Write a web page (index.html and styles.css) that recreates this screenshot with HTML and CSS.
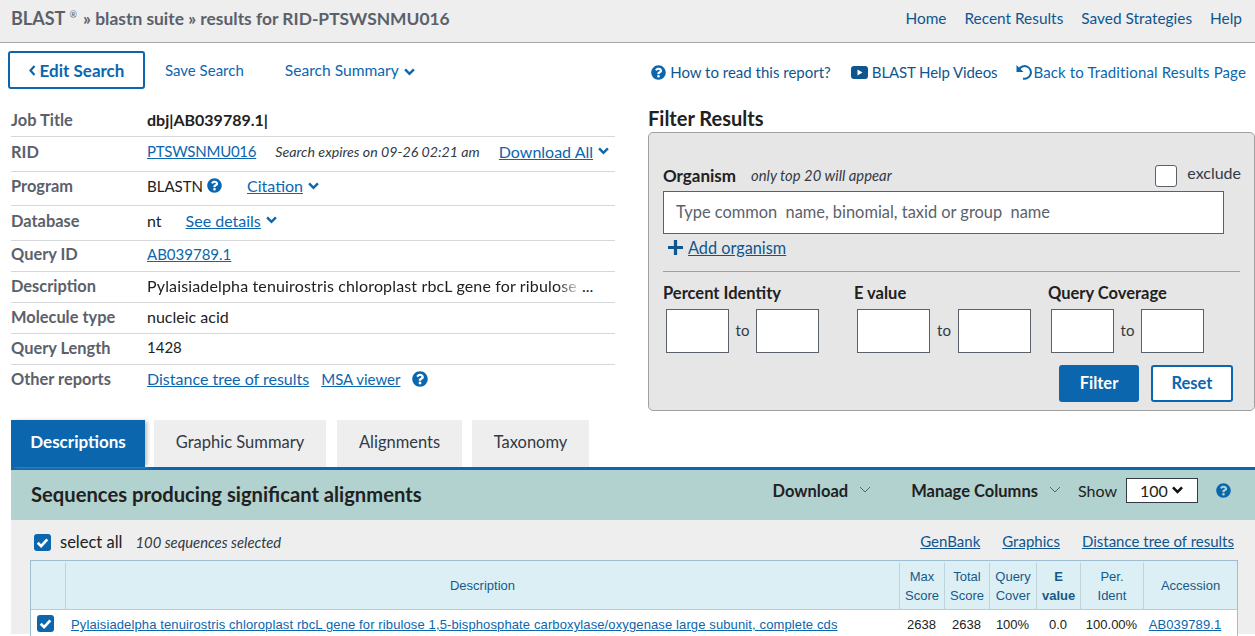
FILE: index.html
```html
<!DOCTYPE html>
<html lang="en">
<head>
    <meta charset="UTF-8">
    <meta name="viewport" content="width=device-width, initial-scale=1.0">
    <title>NCBI Blast: results for RID-PTSWSNMU016</title>
    <link rel="stylesheet" href="styles.css">
</head>
<body>
    <svg class="icon-defs" xmlns="http://www.w3.org/2000/svg">
        <symbol id="i-help" viewBox="0 0 512 512">
            <path fill="currentColor" d="M504 256c0 136.997-111.043 248-248 248S8 392.997 8 256C8 119.083 119.043 8 256 8s248 111.083 248 248zM262.655 90c-54.497 0-89.255 22.957-116.549 63.758-3.536 5.286-2.353 12.415 2.715 16.258l34.699 26.31c5.205 3.947 12.621 3.008 16.665-2.122 17.864-22.658 30.113-35.797 57.303-35.797 20.429 0 45.698 13.148 45.698 32.958 0 14.976-12.363 22.667-32.534 33.976C247.128 238.528 216 254.941 216 296v4c0 6.627 5.373 12 12 12h56c6.627 0 12-5.373 12-12v-1.333c0-28.462 83.186-29.647 83.186-106.667 0-58.002-60.165-102-116.531-102zM256 338c-25.365 0-46 20.635-46 46 0 25.364 20.635 46 46 46s46-20.636 46-46c0-25.365-20.635-46-46-46z"/>
        </symbol>
        <symbol id="i-down" viewBox="0 0 10 7">
            <path fill="none" stroke="currentColor" stroke-width="2.2" d="M1 1.200l4 4 4-4"/>
        </symbol>
        <symbol id="i-down-thin" viewBox="0 0 12 7">
            <path fill="none" stroke="currentColor" stroke-width="1" d="M1 1l5 5 5-5"/>
        </symbol>
        <symbol id="i-check" viewBox="0 0 16 16">
            <path fill="none" stroke="#fff" stroke-width="2.6" d="M3.500 8.200l3.200 3.200 5.800-6.400"/>
        </symbol>
    </svg>

    <header class="topbar">
        <div class="crumbs"><span class="crumb-blast">BLAST</span><sup>®</sup> » blastn suite » results for RID-PTSWSNMU016</div>
        <nav class="topnav">
            <a href="#">Home</a>
            <a href="#">Recent Results</a>
            <a href="#">Saved Strategies</a>
            <a href="#">Help</a>
        </nav>
    </header>

    <div class="toolbar">
        <a class="btn-edit" href="#">
            <svg class="chev-left" viewBox="0 0 7 11"><path fill="none" stroke="currentColor" stroke-width="2.2" d="M5.500 1L1.500 5.500l4 4.500"/></svg>
            Edit Search
        </a>
        <a class="tool-link save" href="#">Save Search</a>
        <a class="tool-link summary" href="#">Search Summary<svg class="chev"><use href="#i-down"/></svg></a>
        <div class="toolbar-right">
            <a href="#" class="help-read"><svg class="help"><use href="#i-help"/></svg>How to read this report?</a>
            <a href="#" class="help-video">
                <svg class="yt" viewBox="0 0 17 13"><rect width="17" height="13" rx="3" fill="currentColor"/><path d="M6.500 3.500l5 3-5 3z" fill="#fff"/></svg>
                BLAST Help Videos
            </a>
            <a href="#" class="back-link">
                <svg class="undo" viewBox="0 0 17 16"><path fill="none" stroke="currentColor" stroke-width="2" d="M3 5.500A6.300 6.300 0 1 1 7 14.500"/><path fill="currentColor" d="M.5 1v7h7z"/></svg>Back to Traditional Results Page
            </a>
        </div>
    </div>

    <main class="summary-grid">
        <section class="job-info">
            <div class="row r1"><span class="lbl">Job Title</span><strong>dbj|AB039789.1|</strong></div>
            <div class="row r2">
                <span class="lbl">RID</span>
                <a href="#" class="num">PTSWSNMU016</a>
                <em class="expires">Search expires on 09-26 02:21 am</em>
                <a href="#" class="download-all">Download All</a><svg class="chev"><use href="#i-down"/></svg>
            </div>
            <div class="row r3">
                <span class="lbl">Program</span><span class="num">BLASTN</span><svg class="help inline"><use href="#i-help"/></svg>
                <a href="#" class="citation">Citation</a><svg class="chev"><use href="#i-down"/></svg>
            </div>
            <div class="row r4">
                <span class="lbl">Database</span>nt
                <a href="#" class="details">See details</a><svg class="chev"><use href="#i-down"/></svg>
            </div>
            <div class="row r5"><span class="lbl">Query ID</span><a href="#" class="num">AB039789.1</a></div>
            <div class="row">
                <span class="lbl">Description</span>
                <span class="fade">Pylaisiadelpha tenuirostris chloroplast rbcL gene for ribulose</span>
                <span class="more">...</span>
            </div>
            <div class="row"><span class="lbl">Molecule type</span>nucleic acid</div>
            <div class="row"><span class="lbl">Query Length</span><span class="num">1428</span></div>
            <div class="row last">
                <span class="lbl">Other reports</span>
                <a href="#">Distance tree of results</a>
                <a href="#" class="msa num">MSA viewer</a>
                <svg class="help msa-help"><use href="#i-help"/></svg>
            </div>
        </section>

        <section class="filter">
            <h2>Filter Results</h2>
            <form class="filter-box">
                <div class="org-head">
                    <label class="org-label">Organism</label>
                    <em>only top 20 will appear</em>
                    <span class="exclude"><input type="checkbox">exclude</span>
                </div>
                <input class="org-input" type="text" placeholder="Type common  name, binomial, taxid or group  name">
                <div class="add-org">
                    <svg class="plus" viewBox="0 0 14 14"><path fill="currentColor" d="M5.500 0h3v5.500H14v3H8.500V14h-3V8.500H0v-3h5.500z"/></svg>
                    <a href="#">Add organism</a>
                </div>
                <hr>
                <div class="ranges">
                    <div class="range">
                        <label>Percent Identity</label>
                        <div class="range-inputs"><input type="text"><span>to</span><input type="text"></div>
                    </div>
                    <div class="range wide">
                        <label>E value</label>
                        <div class="range-inputs"><input type="text"><span>to</span><input type="text"></div>
                    </div>
                    <div class="range">
                        <label>Query Coverage</label>
                        <div class="range-inputs"><input type="text"><span>to</span><input type="text"></div>
                    </div>
                </div>
                <div class="filter-btns">
                    <button type="button" class="btn-filter">Filter</button>
                    <button type="button" class="btn-reset">Reset</button>
                </div>
            </form>
        </section>
    </main>

    <section class="results">
        <ul class="tabs">
            <li class="tab active">Descriptions</li>
            <li class="tab graphic">Graphic Summary</li>
            <li class="tab align">Alignments</li>
            <li class="tab taxo">Taxonomy</li>
        </ul>
        <div class="seq-band">
            <h3>Sequences producing significant alignments</h3>
            <div class="band-tools">
                <span class="band-btn download">Download<svg class="chev-thin"><use href="#i-down-thin"/></svg></span>
                <span class="band-btn manage">Manage Columns<svg class="chev-thin"><use href="#i-down-thin"/></svg></span>
                <span class="show">Show</span>
                <span class="show-select">100<svg class="chev-sel"><use href="#i-down"/></svg></span>
                <svg class="help band-help"><use href="#i-help"/></svg>
            </div>
        </div>
        <div class="seq-body">
            <div class="select-row">
                <span class="cbx"><svg><use href="#i-check"/></svg></span>
                <span class="select-all">select all</span>
                <em>100 sequences selected</em>
                <div class="select-links">
                    <a href="#">GenBank</a>
                    <a href="#">Graphics</a>
                    <a href="#">Distance tree of results</a>
                </div>
            </div>
            <table class="seq-table">
                <colgroup>
                    <col class="c-check"><col><col class="c-score"><col class="c-score"><col class="c-query"><col class="c-eval"><col class="c-per"><col class="c-acc">
                </colgroup>
                <thead>
                    <tr>
                        <th></th>
                        <th>Description</th>
                        <th>Max Score</th>
                        <th>Total Score</th>
                        <th>Query Cover</th>
                        <th><b>E value</b></th>
                        <th>Per. Ident</th>
                        <th>Accession</th>
                    </tr>
                </thead>
                <tbody>
                    <tr>
                        <td><span class="cbx small"><svg><use href="#i-check"/></svg></span></td>
                        <td class="desc"><a href="#">Pylaisiadelpha tenuirostris chloroplast rbcL gene for ribulose 1,5-bisphosphate carboxylase/oxygenase large subunit, complete cds</a></td>
                        <td>2638</td>
                        <td>2638</td>
                        <td>100%</td>
                        <td>0.0</td>
                        <td>100.00%</td>
                        <td class="acc"><a href="#">AB039789.1</a></td>
                    </tr>
                </tbody>
            </table>
        </div>
    </section>
</body>
</html>
```

FILE: styles.css
```css
/* General */
html, body {
    margin: 0;
    padding: 0;
    height: 636px;
    overflow: hidden;
}

body {
    background: #fff;
    color: #212121;
    font-family: "Lato", "Open Sans", sans-serif;
    font-size: 16px;
}

a {
    color: #0b66ae;
}

.icon-defs {
    display: none;
}

.help {
    width: 15px;
    height: 15px;
    color: #0b66ae;
    flex: none;
}

.chev {
    width: 11px;
    height: 8px;
    margin-left: 5px;
    color: #0b66ae;
    flex: none;
}

/* Top bar */
.topbar {
    display: flex;
    align-items: center;
    justify-content: space-between;
    box-sizing: border-box;
    height: 43px;
    background: #eeeeee;
    border-bottom: 1px solid #a9a9a9;
    padding: 0 13px 6px 11px;
}

.crumbs {
    color: #5b616b;
    font-weight: 700;
    font-size: 17.4px;
}

.crumb-blast {
    font-size: 18px;
}

.crumbs sup {
    font-size: 9px;
    font-weight: 400;
    margin-left: 4px;
    margin-right: 2px;
}

.topnav {
    display: flex;
    gap: 18px;
    font-size: 15.4px;
}

.topnav a {
    color: #0f568f;
    text-decoration: none;
}

/* Toolbar */
.toolbar {
    display: flex;
    align-items: center;
    height: 61px;
    padding-left: 8px;
    padding-right: 9px;
    font-size: 15px;
}

.toolbar a {
    text-decoration: none;
}

.btn-edit {
    display: flex;
    align-items: center;
    justify-content: center;
    gap: 4px;
    box-sizing: border-box;
    width: 137px;
    height: 38px;
    margin-top: -7px;
    border: 2px solid #0b66ae;
    border-radius: 3px;
    font-weight: 700;
    font-size: 17px;
}

.chev-left {
    width: 7px;
    height: 11px;
}

.tool-link {
    margin-top: -7px;
}

.save {
    margin-left: 20px;
}

.summary {
    margin-left: 41px;
    font-size: 15.6px;
}

.toolbar-right {
    display: flex;
    align-items: center;
    margin-left: auto;
    margin-top: -3px;
}

.toolbar-right a {
    display: flex;
    align-items: center;
    color: #0f568f;
}

.help-read .help {
    margin-right: 4px;
}

.help-video {
    margin-left: 20px;
    letter-spacing: -0.1px;
}

.yt {
    width: 17px;
    height: 13px;
    margin-right: 4px;
}

.back-link {
    margin-left: 19px;
    letter-spacing: 0.13px;
}

.toolbar-right .back-link {
    color: #0b66ae;
}

.undo {
    width: 17px;
    height: 16px;
}

/* Job summary + filter */
.summary-grid {
    display: grid;
    grid-template-columns: 604px 607px;
    column-gap: 33px;
    padding-left: 11px;
}

.row {
    display: flex;
    align-items: center;
    box-sizing: border-box;
    height: 31px;
    padding-bottom: 4px;
    border-bottom: 1px solid #d6d7d9;
    font-size: 16px;
}

.r1 {
    height: 33px;
    padding-bottom: 2px;
}

.r2, .r4 {
    height: 35px;
    padding-bottom: 6px;
}

.r3 {
    height: 34px;
    padding-bottom: 6px;
}

.r5 {
    padding-bottom: 5px;
}

.row.last {
    border-bottom: 0;
}

.num {
    font-size: 15px;
}

.r2 .num {
    letter-spacing: -0.25px;
}

.lbl {
    flex: none;
    width: 136px;
    color: #5b616b;
    font-weight: 700;
    font-size: 16.4px;
}

.expires {
    margin-left: 19px;
    font-size: 14.2px;
    color: #323a45;
}

.download-all {
    margin-left: auto;
}

.r2 .chev {
    margin-right: 6px;
}

.help.inline {
    margin-left: 4px;
}

.citation {
    margin-left: 25px;
}

.details {
    margin-left: 24px;
}

.fade {
    width: 432px;
    white-space: nowrap;
    letter-spacing: 0.15px;
    -webkit-mask-image: linear-gradient(to right, #000 95%, rgba(0, 0, 0, 0.15) 100%);
    mask-image: linear-gradient(to right, #000 95%, rgba(0, 0, 0, 0.15) 100%);
}

.more {
    margin-left: 3px;
}

.msa {
    margin-left: 12px;
}

.msa-help {
    margin-left: 12px;
    width: 16px;
    height: 16px;
}

.filter h2 {
    margin: 0;
    height: 28px;
    line-height: 28px;
    font-size: 20px;
    font-weight: 700;
}

.filter-box {
    box-sizing: border-box;
    height: 279px;
    padding: 28px 0 0 14px;
    background: #e6e6e6;
    border: 1px solid #a0a0a0;
    border-radius: 5px;
}

.org-head {
    display: flex;
    align-items: center;
    height: 30px;
    padding-right: 13px;
}

.org-label {
    font-weight: 700;
    font-size: 17px;
    margin-top: -2px;
}

.org-head em {
    margin-left: 15px;
    font-size: 14.8px;
    color: #323a45;
    margin-top: -2px;
}

.exclude {
    display: flex;
    align-items: center;
    margin-left: auto;
    margin-top: -7px;
    font-size: 16px;
    color: #323a45;
}

.exclude input {
    appearance: none;
    box-sizing: border-box;
    width: 22px;
    height: 22px;
    margin: 6px 10px 0 0;
    background: #fff;
    border: 1px solid #5b616b;
    border-radius: 3px;
}

.org-input {
    display: block;
    box-sizing: border-box;
    width: 561px;
    height: 43px;
    padding: 0 12px 2px;
    border: 1px solid #5b616b;
    background: #fff;
    font-family: inherit;
    font-size: 16.4px;
}

.org-input::placeholder {
    color: #5b616b;
}

.add-org {
    display: flex;
    align-items: center;
    box-sizing: border-box;
    height: 28px;
    padding: 0 0 2px 5px;
    font-size: 16.3px;
}

.add-org a {
    color: #0f568f;
    margin-left: 5px;
}

.plus {
    width: 15px;
    height: 15px;
    color: #0f568f;
}

.filter-box hr {
    margin: 9px 14px 0 0;
    border: 0;
    border-top: 1px solid #a0a0a0;
}

.ranges {
    display: grid;
    grid-template-columns: 191px 194px 1fr;
    margin-top: 11px;
}

.range label {
    display: block;
    height: 26px;
    line-height: 20px;
    font-weight: 700;
    font-size: 16.5px;
}

.range-inputs {
    display: flex;
    align-items: center;
    padding-left: 3px;
}

.range-inputs input {
    box-sizing: border-box;
    width: 63px;
    height: 44px;
    background: #fff;
    border: 1px solid #5b616b;
}

.range.wide input {
    width: 73px;
}

.range-inputs span {
    width: 27px;
    padding-bottom: 2px;
    text-align: center;
    font-size: 15px;
    color: #323a45;
}

.range.wide .range-inputs span {
    width: 28px;
}

.filter-btns {
    display: flex;
    justify-content: flex-end;
    gap: 12px;
    margin-top: 12px;
    padding-right: 21px;
}

.filter-btns button {
    box-sizing: border-box;
    height: 37px;
    padding: 0 0 2px;
    border-radius: 3px;
    font-family: inherit;
    font-size: 16.5px;
    font-weight: 700;
}

.btn-filter {
    width: 80px;
    background: #0b66ae;
    border: 0;
    color: #fff;
}

.btn-reset {
    width: 82px;
    background: #fff;
    border: 2px solid #0b66ae;
    color: #0b66ae;
}

/* Results */
.results {
    margin: 9px 0 0 11px;
}

.tabs {
    display: flex;
    list-style: none;
    margin: 0;
    padding: 0;
    height: 47px;
}

.tab {
    display: flex;
    align-items: center;
    justify-content: center;
    box-sizing: border-box;
    background: #eeeeee;
    font-size: 16.5px;
    color: #323a45;
    padding-bottom: 4px;
}

.tab.active {
    width: 134px;
    background: #0b66ae;
    color: #fff;
    font-weight: 700;
    font-size: 17px;
    box-shadow: 3px 0 4px -1px #bbb;
    margin-right: 9px;
}

.tab.graphic {
    width: 172px;
    margin-right: 11px;
}

.tab.align {
    width: 125px;
    margin-right: 10px;
}

.tab.taxo {
    width: 117px;
}

.seq-band {
    display: flex;
    align-items: center;
    justify-content: space-between;
    box-sizing: border-box;
    height: 53px;
    padding: 0 24px 0 20px;
    background: #b1d2cf;
    border-top: 3px solid #0b66ae;
}

.seq-band h3 {
    margin: 0 0 3px;
    font-size: 20.2px;
    font-weight: 700;
}

.band-tools {
    display: flex;
    align-items: center;
    margin-bottom: 10px;
}

.band-btn {
    display: flex;
    align-items: center;
    font-weight: 700;
    font-size: 16.5px;
    padding-top: 2px;
}

.chev-thin {
    width: 12px;
    height: 7px;
    margin: -3px 0 0 11px;
    color: #5b616b;
}

.download {
    margin-right: 40px;
}

.show {
    margin-left: 17px;
    font-size: 16px;
}

.show-select {
    display: flex;
    align-items: center;
    justify-content: space-between;
    box-sizing: border-box;
    width: 72px;
    height: 25px;
    margin-left: 9px;
    padding: 0 13px;
    background: #fff;
    border: 1px solid #323a45;
    font-size: 16px;
}

.chev-sel {
    width: 13px;
    height: 8px;
    color: #111;
}

.band-help {
    margin-left: 18px;
}

.seq-body {
    height: 114px;
    background: #eeeeee;
    padding-left: 19px;
}

.select-row {
    display: flex;
    align-items: center;
    box-sizing: border-box;
    height: 40px;
    padding: 4px 0 0 4px;
}

.cbx {
    display: block;
    flex: none;
    width: 17px;
    height: 17px;
    background: #0b66ae;
    border-radius: 3px;
}

.cbx svg {
    display: block;
    width: 100%;
    height: 100%;
}

.select-all {
    margin-left: 9px;
    font-size: 16.5px;
}

.select-row em {
    margin-left: 13px;
    font-size: 14.8px;
    color: #323a45;
}

.select-links {
    display: flex;
    gap: 22px;
    margin: -2px 21px 0 auto;
    font-size: 15px;
}

.select-links a {
    color: #0f568f;
}

.seq-table {
    width: 1208px;
    table-layout: fixed;
    border-collapse: separate;
    border-spacing: 0;
    border: 1px solid #9dbdd0;
    border-bottom: 0;
    background: #fff;
    font-family: "Liberation Sans", Arial, sans-serif;
    font-size: 13px;
}

.c-check {
    width: 34px;
}

.c-score {
    width: 45px;
}

.c-query {
    width: 47px;
}

.c-eval {
    width: 44px;
}

.c-per {
    width: 63px;
}

.c-acc {
    width: 94px;
}

.seq-table th {
    height: 43px;
    padding: 0 5px 2px;
    background: #dceff5;
    border-top: 3px solid #dceff5;
    border-left: 1px solid #bfd3db;
    border-bottom: 1px solid #b4cdd8;
    color: #155a8a;
    font-weight: 400;
    line-height: 19px;
    text-align: center;
}

.seq-table th:first-child {
    border-left: 0;
}

.seq-table td {
    height: 25px;
    padding: 2px 0 0;
    text-align: center;
    border-bottom: 1px solid #e4e4e4;
}

.seq-table td.desc {
    padding-left: 6px;
    text-align: left;
    letter-spacing: 0.12px;
}

.seq-table td.acc {
    padding-right: 10px;
    letter-spacing: 0.1px;
}

.cbx.small {
    width: 17px;
    height: 17px;
    margin: -2px 0 0 6px;
}
```
